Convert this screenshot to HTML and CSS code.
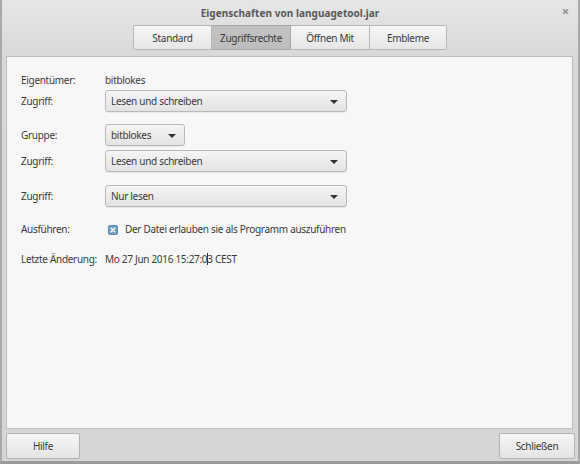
FILE: index.html
```html
<!DOCTYPE html>
<html lang="de">
<head>
<meta charset="utf-8">
<title>Eigenschaften von languagetool.jar</title>
<link rel="stylesheet" href="styles.css">
</head>
<body>
<div class="window">
  <div class="titlebar">
    <span class="title">Eigenschaften von languagetool.jar</span>
    <span class="close">×</span>
  </div>
  <div class="tabs">
    <div class="tab t1">Standard</div>
    <div class="tab t2 active">Zugriffsrechte</div>
    <div class="tab t3">Öffnen Mit</div>
    <div class="tab t4">Embleme</div>
  </div>
  <div class="panel">
    <div class="row r1"><span class="label">Eigentümer:</span><span class="value">bitblokes</span></div>
    <div class="row r2"><span class="label">Zugriff:</span><div class="combo wide">Lesen und schreiben<span class="arrow"></span></div></div>
    <div class="row r3"><span class="label">Gruppe:</span><div class="combo small">bitblokes<span class="arrow"></span></div></div>
    <div class="row r4"><span class="label">Zugriff:</span><div class="combo wide">Lesen und schreiben<span class="arrow"></span></div></div>
    <div class="row r5"><span class="label">Zugriff:</span><div class="combo wide">Nur lesen<span class="arrow"></span></div></div>
    <div class="row r6"><span class="label">Ausführen:</span><span class="check"><svg width="10" height="10" viewBox="0 0 10 10"><rect x="0.5" y="0.5" width="9" height="9" rx="1.5" fill="#729ebf" stroke="#5f8aab"/><path d="M3.2 3.2 L6.8 6.8 M6.8 3.2 L3.2 6.8" stroke="#fff" stroke-width="1.5" stroke-linecap="round"/></svg></span><span class="value">Der Datei erlauben sie als Programm auszuführen</span></div>
    <div class="row r7"><span class="label">Letzte Änderung:</span><span class="value date">Mo 27 Jun 2016 15:27:0<span class="caret"></span>3 CEST</span></div>
  </div>
  <div class="footer">
    <div class="btn hilfe">Hilfe</div>
    <div class="btn schliessen">Schließen</div>
  </div>
</div>
</body>
</html>
```
FILE: styles.css
```css
* { box-sizing: border-box; }
html, body { margin: 0; padding: 0; }
body {
  width: 580px;
  height: 464px;
  overflow: hidden;
  font-family: "Noto Sans", "Open Sans", sans-serif;
  font-size: 10px;
  letter-spacing: -0.3px;
  color: #3a3a3a;
  background: #d5d5d5;
}
.window {
  width: 580px;
  height: 464px;
  background: linear-gradient(#e6e6e6 0px, #d9d9d9 55px, #d6d6d6 100%);
  border-left: 2px solid #a9a9a9;
  border-right: 2px solid #a9a9a9;
  border-bottom: 3px solid #9a9a9a;
  display: flex;
  flex-direction: column;
}
.titlebar {
  height: 25px;
  flex: none;
  display: flex;
  align-items: center;
  justify-content: center;
  position: relative;
}
.title {
  font-weight: bold;
  font-size: 10px;
  letter-spacing: 0.05px;
  color: #585858;
}
.close {
  position: absolute;
  right: 9px;
  top: 2px;
  font-size: 13px;
  color: #8e8e8e;
  font-weight: bold;
}
.tabs {
  display: flex;
  justify-content: center;
  height: 25px;
  flex: none;
}
.tab {
  height: 25px;
  border: 1px solid #b8b8b8;
  border-left: none;
  background: linear-gradient(#f6f6f6, #e6e6e6);
  display: flex;
  align-items: center;
  justify-content: center;
  color: #3a3a3a;
  letter-spacing: -0.3px;
}
.tab.t1 { width: 79px; border-left: 1px solid #b8b8b8; border-radius: 2px 0 0 2px; }
.tab.t2 { width: 79px; }
.tab.t3 { width: 79px; }
.tab.t4 { width: 77px; border-radius: 0 2px 2px 0; }
.tab.active {
  background: linear-gradient(#c3c3c3, #bdbdbd);
  border-color: #a8a8a8;
}
.panel {
  margin: 6px 5px 0 4px;
  height: 373px;
  flex: none;
  border: 1px solid #bdbdbd;
  background: #f7f7f7;
  padding: 10px 0 0 14px;
  display: flex;
  flex-direction: column;
}
.row {
  height: 22px;
  display: flex;
  align-items: center;
}
.label {
  width: 84px;
  flex: none;
}
.r1 { padding-top: 4px; }
.r2 { margin-top: 1px; }
.r3 { margin-top: 12px; }
.r4 { margin-top: 4px; }
.r5 { margin-top: 13px; }
.r6 { margin-top: 11px; }
.r7 { margin-top: 8px; }
.combo {
  height: 22px;
  border: 1px solid #b9b9b9;
  border-radius: 3px;
  background: linear-gradient(#f5f5f5, #e3e3e3);
  display: flex;
  align-items: center;
  padding-left: 5px;
  position: relative;
  box-shadow: 0 1px 0 rgba(0,0,0,0.06);
}
.combo.wide { width: 242px; }
.combo.small { width: 80px; }
.arrow {
  position: absolute;
  right: 8px;
  top: 9px;
  width: 0;
  height: 0;
  border-left: 4px solid transparent;
  border-right: 4px solid transparent;
  border-top: 4px solid #333;
}
.check {
  width: 10px;
  height: 10px;
  margin-left: 3px;
  margin-right: 7px;
  margin-top: 2px;
  display: flex;
}
.caret {
  display: inline-block;
  width: 1px;
  height: 12px;
  background: #333;
  vertical-align: -2px;
  margin-right: -1px;
}
.footer {
  flex: 1;
  display: flex;
  justify-content: space-between;
  align-items: flex-start;
  padding: 4px 3px 0 4px;
}
.btn {
  height: 26px;
  border: 1px solid #b3b3b3;
  border-radius: 2px;
  background: linear-gradient(#f6f6f6, #e4e4e4);
  display: flex;
  align-items: center;
  justify-content: center;
}
.btn.hilfe { width: 74px; }
.btn.schliessen { width: 76px; }
```
